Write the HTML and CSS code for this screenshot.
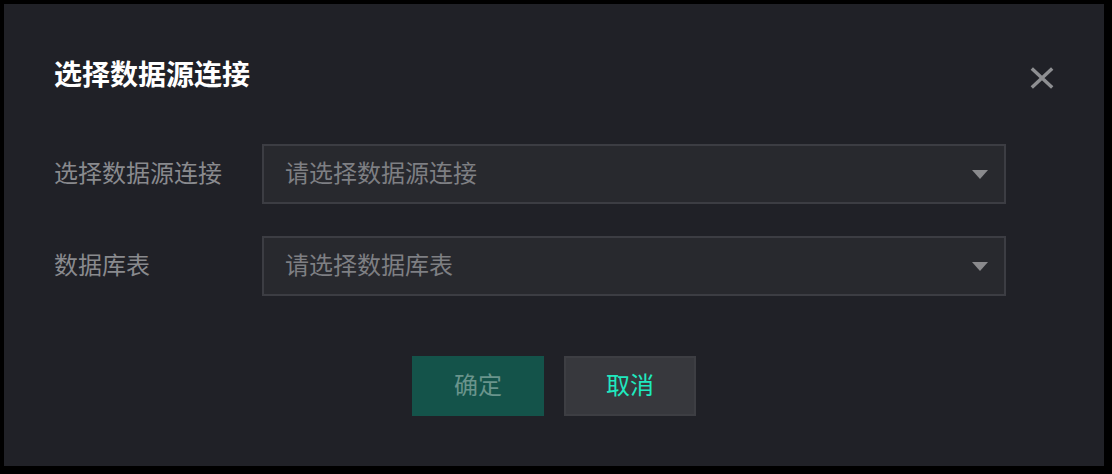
FILE: index.html
```html
<!DOCTYPE html>
<html lang="zh-CN">
<head>
<meta charset="utf-8">
<title>选择数据源连接</title>
<link rel="stylesheet" href="styles.css">
</head>
<body>
<div class="dialog">
  <div class="dialog-header">
    <h1 class="dialog-title">选择数据源连接</h1>
    <button class="close-btn" aria-label="关闭">
      <svg width="24" height="22" viewBox="0 0 24 22"><path d="M1.8 1.5 L22.2 20.5 M22.2 1.5 L1.8 20.5" stroke="#8e8f92" stroke-width="3.4" fill="none"/></svg>
    </button>
  </div>
  <div class="form">
    <div class="form-row">
      <label class="form-label">选择数据源连接</label>
      <div class="select">
        <span class="placeholder">请选择数据源连接</span>
        <span class="arrow"></span>
      </div>
    </div>
    <div class="form-row">
      <label class="form-label">数据库表</label>
      <div class="select">
        <span class="placeholder">请选择数据库表</span>
        <span class="arrow"></span>
      </div>
    </div>
  </div>
  <div class="actions">
    <button class="btn btn-primary">确定</button>
    <button class="btn btn-default">取消</button>
  </div>
</div>
</body>
</html>
```

FILE: styles.css
```css
html, body {
  margin: 0;
  padding: 0;
  background: #000;
  height: 474px;
  overflow: hidden;
}
body {
  font-family: "Noto Sans CJK SC", "Noto Sans", sans-serif;
}
.dialog {
  margin: 4px;
  width: 1100px;
  height: 462px;
  box-sizing: border-box;
  background: #202127;
  padding: 50px 50px 50px 50px;
  display: flex;
  flex-direction: column;
}
.dialog-header {
  display: flex;
  justify-content: space-between;
  align-items: flex-start;
  height: 40px;
}
.dialog-title {
  margin: 0;
  font-size: 28px;
  line-height: 38px;
  font-weight: 700;
  color: #ffffff;
}
.close-btn {
  margin-top: 13px;
  padding: 0;
  border: 0;
  background: transparent;
  width: 24px;
  height: 22px;
  display: block;
  cursor: pointer;
}
.close-btn svg { display: block; }
.form {
  margin-top: 50px;
  display: flex;
  flex-direction: column;
  gap: 32px;
}
.form-row {
  display: flex;
  align-items: center;
  height: 60px;
}
.form-label {
  width: 208px;
  font-size: 24px;
  color: #898a8e;
  line-height: 32px;
  padding-bottom: 5px;
}
.select {
  width: 744px;
  height: 60px;
  box-sizing: border-box;
  border: 2px solid #3c3d43;
  background: #28292e;
  display: flex;
  align-items: center;
  justify-content: space-between;
  padding: 0 16px 0 21px;
}
.placeholder {
  font-size: 24px;
  color: #7e7f83;
  line-height: 32px;
  padding-bottom: 5px;
}
.arrow {
  width: 0;
  height: 0;
  border-left: 8px solid transparent;
  border-right: 8px solid transparent;
  border-top: 9px solid #8a8a8d;
  margin-top: 1px;
}
.actions {
  margin-top: 60px;
  display: flex;
  justify-content: center;
  gap: 20px;
}
.btn {
  width: 132px;
  height: 60px;
  font-family: inherit;
  font-size: 24px;
  line-height: 32px;
  padding: 0 0 5px 0;
  cursor: pointer;
}
.btn-primary {
  background: #14534a;
  border: 0;
  color: #6a948c;
}
.btn-default {
  background: #37383d;
  border: 2px solid #3d3e43;
  color: #1fe9bf;
}
```
